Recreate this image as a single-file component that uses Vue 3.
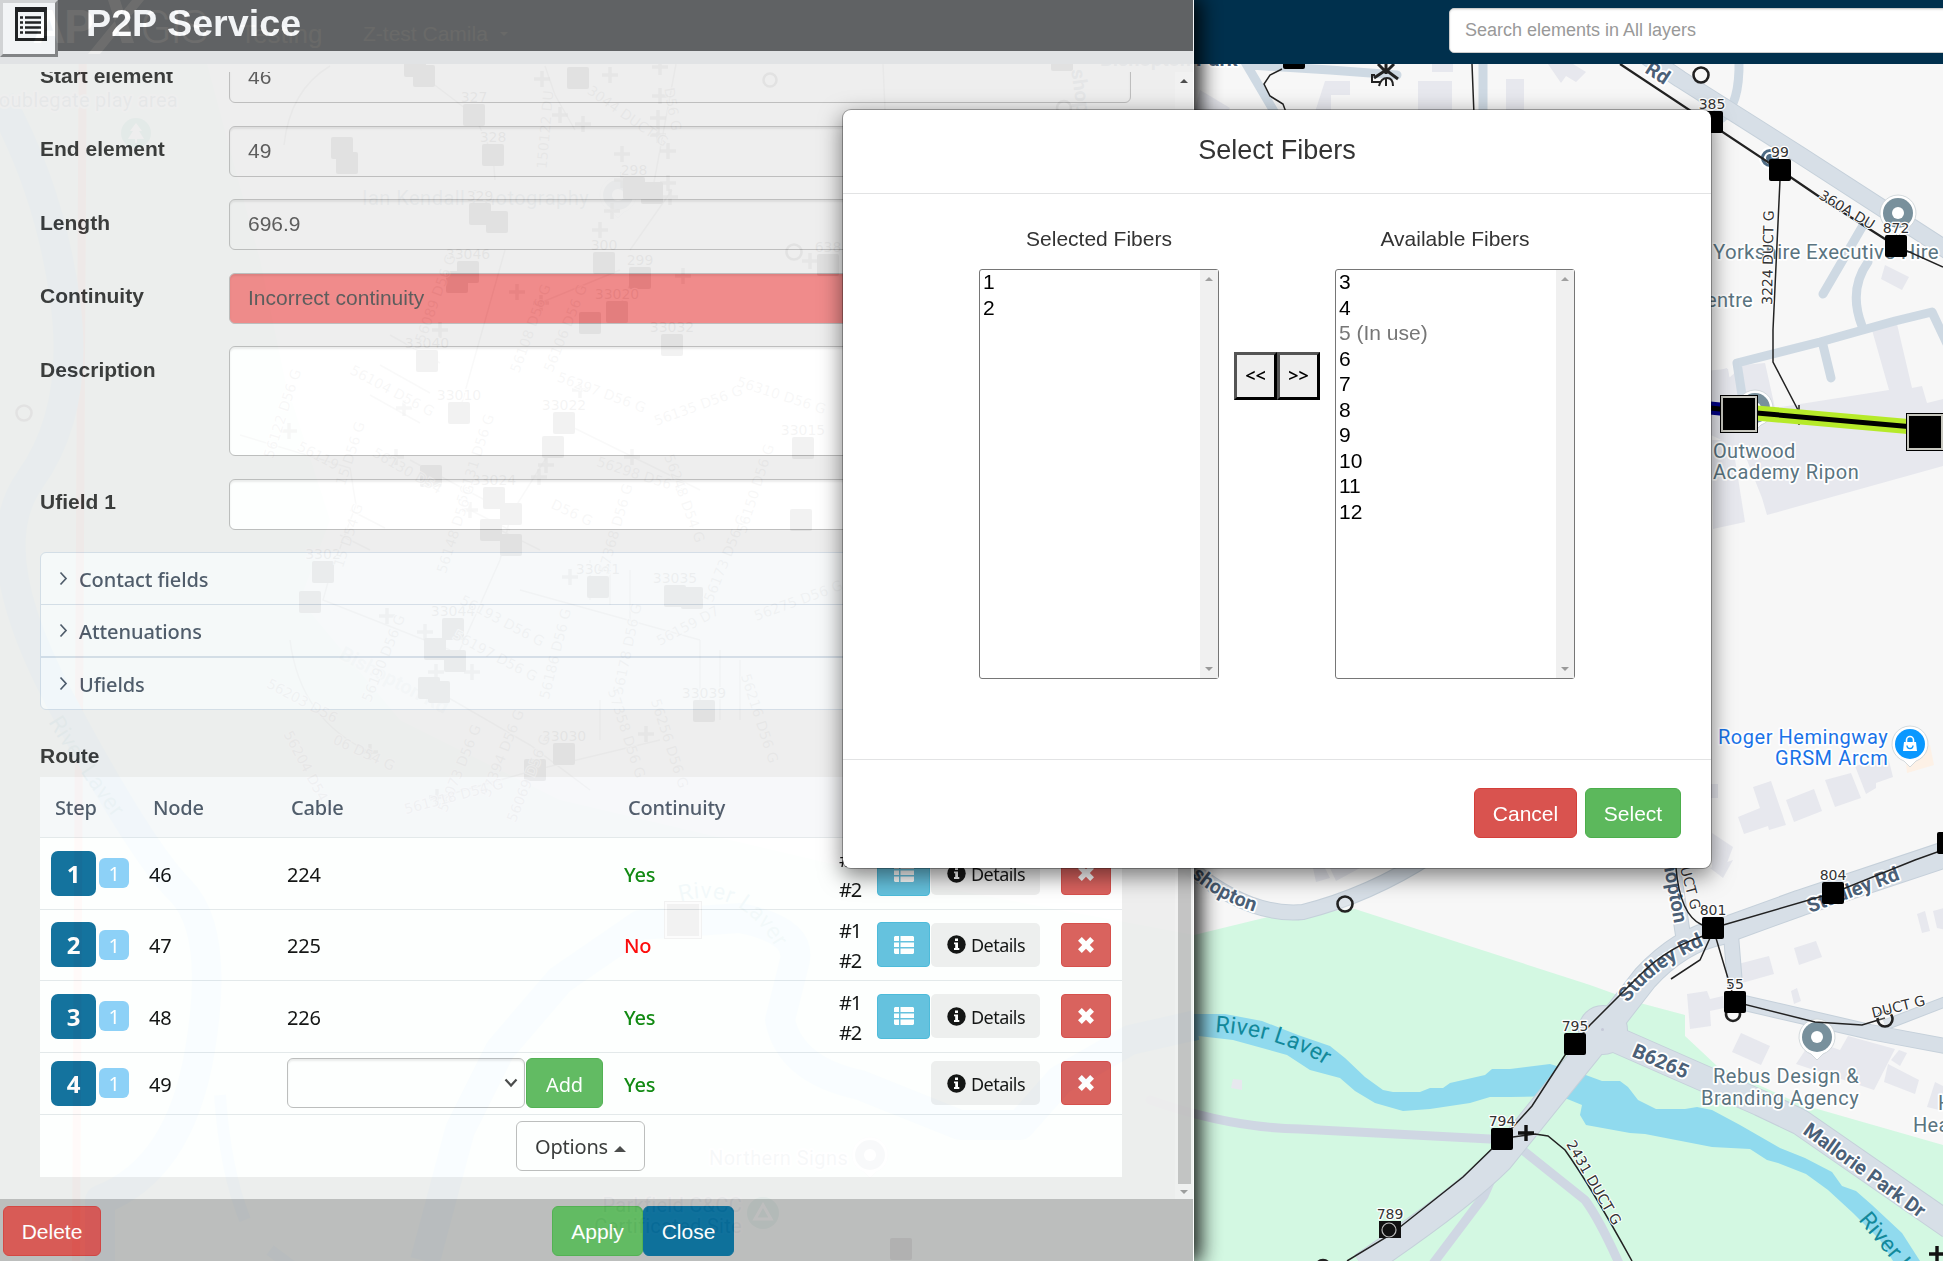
<script setup>
const steps = [
  { n: 1, node: 46, cable: '224', ok: true, fibers: ['#1', '#2'], h: 72 },
  { n: 2, node: 47, cable: '225', ok: false, fibers: ['#1', '#2'], h: 71 },
  { n: 3, node: 48, cable: '226', ok: true, fibers: ['#1', '#2'], h: 72 },
  { n: 4, node: 49, cable: null, ok: true, fibers: [], h: 62 },
]
const sections = ['Contact fields', 'Attenuations', 'Ufields']
const selected = ['1', '2']
const available = ['3', '4', '5 (In use)', '6', '7', '8', '9', '10', '11', '12']

const squares = [
  [1575, 1044, '795'], [1502, 1139, '794'], [1713, 928, '801'], [1833, 893, '804'],
  [1735, 1002, '55'], [1780, 170, '99'], [1896, 246, '872'], [1712, 122, '385'], [1294, 58, ''],
  [1948, 843, '8'],
  [415, 66, ''], [424, 76, ''], [474, 115, '327'], [493, 155, '328'], [347, 163, ''], [342, 148, ''],
  [480, 214, '329'], [497, 222, ''], [457, 282, ''], [468, 272, '33046'], [604, 263, '300'], [634, 188, '298'],
  [652, 193, ''], [640, 278, '299'], [617, 312, '33020'], [590, 323, ''], [672, 345, '33032'], [828, 265, '638'],
  [427, 361, '33040'], [459, 413, '33010'], [564, 423, '33022'], [553, 447, ''], [431, 476, ''], [494, 498, '33024'],
  [511, 514, ''], [491, 530, ''], [511, 545, ''], [323, 572, '3302'], [310, 602, ''], [598, 587, '33041'],
  [453, 629, '33044'], [435, 649, ''], [455, 661, ''], [429, 688, ''], [439, 692, ''], [675, 596, '33035'],
  [692, 598, ''], [704, 711, '33039'], [564, 754, '33030'], [535, 770, ''], [578, 78, ''], [1062, 60, ''],
  [803, 448, '33015'], [801, 520, ''], [901, 1249, ''],
]
const crosses = [
  [1526, 1133], [1937, 1254], [542, 79], [610, 75], [560, 115], [583, 124], [622, 154], [622, 180], [612, 211],
  [600, 230], [517, 292], [541, 303], [440, 330], [580, 390], [404, 408], [289, 431], [396, 457], [546, 465], [539, 477],
  [470, 510], [632, 457], [570, 577], [387, 616], [425, 632], [436, 672], [472, 672], [370, 752], [437, 797], [660, 67],
  [660, 96], [658, 118], [658, 135], [668, 151], [668, 183], [670, 197], [810, 261], [683, 276], [646, 734],
]
const ducts = [
  [440, 300, -70, '56089 D56 G'], [535, 330, -70, '56108 D56 G'], [570, 330, -68, '56106 D56 G'], [287, 415, -72, '56122 D56 G'],
  [390, 395, 28, '56104 D56 G'], [316, 460, 28, '56119'], [355, 455, -72, '15 D56 G'], [405, 475, 30, '56130 D54'],
  [480, 460, -72, '56131 D56 G'], [353, 537, -72, '15 D54 G'], [460, 530, -72, '56148 D56 G'], [500, 625, 28, '56193 D56 G'],
  [493, 660, 28, '56197 D56 G'], [388, 660, -68, '56190 D56 G'], [560, 655, -76, '56186 D56 G'], [300, 705, 28, '56203 D56'],
  [305, 775, 62, '56204 D54 G'], [362, 757, 25, '06 D54 G'], [464, 770, -68, '56073 D56 G'], [507, 755, -68, '57394 D56 G'],
  [533, 780, -68, '56069 D56 G'], [455, 801, -15, '561318 D54 G'], [600, 397, 20, '56297 D56 G'], [640, 480, 18, '56298 D56 G'],
  [620, 530, -74, '57368 D56 G'], [570, 517, 25, 'D56 G'], [632, 650, -78, '56178 D56 G'], [622, 735, 72, '57358 D56 G'],
  [665, 745, 72, '56256 D56 G'], [755, 720, 72, '56216 D56 G'], [690, 630, -28, '56159 D7'], [800, 605, -20, '56275 D56 G'],
  [730, 560, -68, '56173 D56 G'], [700, 410, -20, '56135 D56 G'], [550, 130, -85, '150122 DU'], [625, 120, 35, '3044 DUCT G'],
  [668, 110, 80, 'D56 G'], [760, 490, -72, '56150 D56 G'], [780, 400, 18, '56310 D56 G'], [680, 500, 70, '56248 D54 G'],
]
const houses = [
  '1325,81 1350,81 1350,95 1331,95 1331,112 1315,112', '1418,81 1452,81 1452,112 1418,112', '1432,64 1453,64 1453,72 1432,72',
  '1506,79 1524,79 1524,112 1506,112', '1200,90 1230,108 1225,115 1194,112',
  '1548,64 1560,56 1586,72 1576,82 1566,76 1561,83',
  '1885,265 1909,277 1902,290 1881,279', '1872,330 1897,324 1912,388 1922,386 1927,403 1947,398 1947,465 1767,515 1762,498 1743,450 1700,430 1690,440 1690,372 1728,369 1731,387 1714,392 1743,365 1765,363 1775,408 1889,390',
  '1712,440 1732,440 1745,522 1713,529',
  '1753,787 1771,781 1786,825 1769,830 1768,826 1744,834 1738,817 1760,808', '1786,800 1814,789 1822,811 1794,822',
  '1825,780 1851,773 1861,798 1835,807', '1855,766 1888,757 1893,777 1876,783 1876,788 1866,794',
  '1712,833 1733,847 1727,863 1712,868', '1794,948 1816,941 1822,957 1799,965', '1738,964 1769,956 1774,974 1742,983',
  '1687,994 1707,991 1710,999 1723,996 1724,1008 1710,1011 1711,1026 1690,1029', '1791,991 1797,988 1801,1001 1794,1004',
  '1741,1033 1770,1046 1761,1065 1732,1052', '1848,1036 1895,1049 1874,1090 1847,1081 1796,1064 1812,1040 1840,1050',
  '1899,1050 1907,1053 1900,1066 1891,1060', '1888,1064 1919,1080 1915,1094 1884,1082', '1917,914 1925,911 1930,931 1922,933',
  '1933,911 1947,907 1947,930 1937,928', '1935,1082 1947,1088 1947,1112 1927,1107', '1313,868 1325,868 1330,878 1316,882',
  '1330,868 1360,868 1336,881', '1233,1079 1242,1080 1242,1090 1231,1088', '1710,868 1733,860 1723,878',
  '1711,784 1718,784 1718,798 1711,798', '1711,373 1727,368 1731,384 1711,390',
]
</script>

<template>
  <div class="app">
    <svg class="map" width="1943" height="1261" viewBox="0 0 1943 1261">
      <defs>
        <path id="p-river" d="M1215 1032 Q1290 1036 1340 1076" />
        <path id="p-bishop" d="M1191 876 Q1220 903 1266 915" />
        <path id="p-hopton" d="M1663 862 L1676 934" />
        <path id="p-studley" d="M1628 1003 Q1655 965 1712 942" />
        <path id="p-studley2" d="M1810 913 L1912 875" />
        <path id="p-river2" d="M1858 1220 L1925 1300" />
        <path id="p-laver" d="M48 722 Q90 790 132 842" />
        <path id="p-laver2" d="M680 902 Q750 880 792 980" />
      </defs>
      <rect width="1943" height="1261" fill="#f7f7f7" />
      <path fill="#d3f8e2" d="M0 0H190L230 150 260 260 285 380 330 520 300 600 400 720 560 800 900 880 1194 935 1272 916 1355 909 1590 985 1640 1003 1685 1015V1036L1717 1066 1800 1104 1943 1145V1261H0Z" />
      <g fill="#e7e8ee"><polygon v-for="h in houses" :key="h" :points="h" /></g>
      <polygon points="1905,752 1930,745 1934,765 1907,773" fill="#fdf1e6" />
      <path stroke="#ff9b80" stroke-width="8" d="M83 0L76 1261" />
      <!-- water -->
      <g fill="none" stroke="#90daee" stroke-width="30" stroke-linejoin="round">
        <path d="M0 100Q50 190 65 300T30 480T60 700T180 890T200 1050T100 1200V1261" />
        <path d="M425 1261L460 1130 500 1050 560 980 640 925 740 918Q800 930 795 960L780 1020Q790 1070 860 1085L960 1125H1020L1060 1080 1130 1040 1196 1025" />
        <path stroke-width="12" d="M220 1095Q225 1170 245 1220M270 1250L350 1310" />
      </g>
      <path fill="#90daee" d="M1190 1014H1225L1262 1021 1298 1035 1330 1046 1345 1058 1365 1077 1383 1090 1393 1092H1420L1430 1088H1443L1450 1083 1485 1075 1492 1069H1510L1550 1064 1583 1074 1602 1081H1620L1628 1087 1638 1100 1656 1109H1685L1697 1107 1712 1110 1740 1125 1780 1148 1805 1158 1832 1172 1842 1186 1856 1191 1872 1205 1902 1233 1920 1261H1893L1880 1240 1853 1213 1828 1190 1806 1174 1778 1163 1767 1160 1750 1149 1712 1147 1645 1134 1630 1133 1586 1125 1580 1115 1582 1105 1560 1096 1510 1097H1490L1470 1103 1430 1109 1403 1111 1375 1103 1355 1091 1340 1078 1310 1070 1287 1055 1233 1040 1190 1035Z" />
      <!-- minor roads -->
      <g fill="none" stroke="#ced9e3" stroke-width="9" stroke-linejoin="round" stroke-linecap="round">
        <path d="M1245 62L1282 125M1250 65L1330 70 1397 75M1483 60V115M1865 222L1823 294M1868 262Q1848 290 1862 326M1742 395L1737 363L1820 342 1895 321 1932 312 1950 350M1823 345L1831 378" />
        <path d="M1739 60Q1740 105 1722 118" />
        <path stroke="#cfd7e3" d="M1150 1100Q1230 1128 1300 1129L1490 1139M1520 1148L1585 1200Q1600 1220 1622 1270M1491 1180L1484 1196 1432 1265" />
      </g>
      <!-- main roads -->
      <g fill="none" stroke-linejoin="round">
        <g stroke="#c5d0da">
          <path stroke-width="18" d="M1640 52L1680 79 1800 155 1950 252" />
          <path stroke-width="16" d="M1190 868Q1250 917 1303 912 1370 895 1430 856M1683 935L1672 862M1731 935L1735 985M1740 1002L1870 1032 1950 1047" />
          <path stroke-width="11" d="M1885 1025L1950 1000" />
          <path stroke-width="27" d="M1362 1266Q1460 1200 1500 1160L1600 1036M1600 1036L1645 978Q1680 940 1720 932L1800 903 1950 853M1612 1038L1760 1103 1800 1122 1950 1226" />
          <circle cx="1603" cy="1030" r="24" stroke-width="2" />
        </g>
        <g stroke="#d7dfe7">
          <path stroke-width="16" d="M1640 52L1680 79 1800 155 1950 252" />
          <path stroke-width="14" d="M1190 868Q1250 917 1303 912 1370 895 1430 856M1683 935L1672 862M1731 935L1735 985M1740 1002L1870 1032 1950 1047" />
          <path stroke-width="9" d="M1885 1025L1950 1000" />
          <path stroke-width="25" d="M1362 1266Q1460 1200 1500 1160L1600 1036M1600 1036L1645 978Q1680 940 1720 932L1800 903 1950 853M1612 1038L1760 1103 1800 1122 1950 1226" />
        </g>
      </g>
      <circle cx="1603" cy="1030" r="24" fill="#d7dfe7" />
      <circle cx="1602.5" cy="1029.500" r="1.500" fill="#c5c9d8" />
      <!-- place names -->
      <g class="halo road">
        <text><textPath href="#p-bishop">shopton</textPath></text>
        <text><textPath href="#p-hopton">hopton</textPath></text>
        <text><textPath href="#p-studley">Studley Rd</textPath></text>
        <text><textPath href="#p-studley2">Studley Rd</textPath></text>
        <text transform="translate(1631 1056) rotate(23)">B6265</text>
        <text transform="translate(1802 1133) rotate(36)">Mallorie Park Dr</text>
        <text transform="translate(1644 72) rotate(33)">Rd</text>
        <text x="1100" y="66">Bishopton Park</text>
        <text transform="translate(1071 70) rotate(82)">shop</text>
        <text transform="translate(338 658) rotate(28)" opacity=".4">Bishopton Rd</text>
      </g>
      <g class="water">
        <text><textPath href="#p-river">River Laver</textPath></text>
        <text><textPath href="#p-river2">River Laver</textPath></text>
        <text><textPath href="#p-laver">River Laver</textPath></text>
        <text><textPath href="#p-laver2">River Laver</textPath></text>
      </g>
      <g>
        <g v-for="p in [[1817, 1037], [1898, 213], [1755, 408], [870, 1155], [618, 195]]" :key="p[0]" :transform="`translate(${p[0]} ${p[1]})`">
          <path d="M0 23L-6 17A18 18 0 1 1 6 17Z" fill="#fff" stroke="#c9d0d4" stroke-width=".8" />
          <circle r="15" fill="#78909c" /><circle r="6" fill="#fff" />
        </g>
        <g transform="translate(136 133)"><circle r="15" fill="#35a58a" /><path d="M0-10L6-2H3L8 6H1V10H-1V6H-8L-3-2H-6Z" fill="#fff" /></g>
        <g transform="translate(763 1213)"><circle r="16" fill="#35a58a" /><path d="M0-8L8 6H-8Z" fill="none" stroke="#fff" stroke-width="3" /></g>
        <g transform="translate(1910 744)">
          <path d="M0 23L-6 17A18 18 0 1 1 6 17Z" fill="#fff" stroke="#c9d0d4" stroke-width=".8" />
          <circle r="15" fill="#0a98ff" />
          <path d="M-6-2H6L7 7H-7Z" fill="#fff" /><path d="M-3.500-2V-4a3.500 3.500 0 0 1 7 0V-2" fill="none" stroke="#fff" stroke-width="1.600" /><path d="M-3 1.500a3 3 0 0 0 6 0" fill="none" stroke="#0a98ff" stroke-width="1.300" />
        </g>
        <circle cx="1770" cy="158" r="10" fill="#4e6b84" stroke="#fff" stroke-width="2" /><path d="M1773 154a5 5 0 1 0 1 7h-4" fill="none" stroke="#fff" stroke-width="2" />
      </g>
      <g class="halo place">
        <text x="1713" y="259" textLength="226" lengthAdjust="spacingAndGlyphs">Yorkshire Executive Hire</text>
        <text x="1753" y="307" text-anchor="end">Centre</text>
        <text x="1713" y="458">Outwood</text>
        <text x="1713" y="479" textLength="146">Academy Ripon</text>
        <text x="1713" y="1083" textLength="146">Rebus Design &amp;</text>
        <text x="1701" y="1105" textLength="158">Branding Agency</text>
        <text x="1938" y="1110">H</text>
        <text x="1913" y="1132">Health</text>
        <text x="178" y="107" text-anchor="end">Doublegate  play area</text>
        <text x="362" y="205" textLength="227">Ian Kendall Photography</text>
        <text x="709" y="1165" textLength="139">Northern Signs</text>
        <text x="742" y="1212" text-anchor="end">Parkfield C&amp;CC</text>
        <text x="742" y="1233" text-anchor="end">Certificated Site</text>
        <text class="shop" x="1718" y="744" textLength="170">Roger Hemingway</text>
        <text class="shop" x="1775" y="765" textLength="113">GRSM Arcm</text>
      </g>
      <!-- network lines -->
      <g fill="none" stroke="#222" stroke-width="1.500">
        <path stroke-width="2.200" d="M1620 64L1780 170 1830 204 1896 246" />
        <path d="M1896 246L1943 267M1780 180L1773 330V362L1798 410M1799 405v5M1799 420v5M1472 64L1474 115M1282 69L1270 75 1264 84 1270 96 1283 104 1287 115" />
        <path d="M1347 1261L1390 1235 1463 1177 1502 1139 1532 1106 1567 1052 1590 1025 1640 975Q1670 945 1710 934M1713 928L1833 893 1915 860 1943 850" />
        <path d="M1513 1137L1535 1134 1548 1136 1565 1150Q1590 1185 1632 1261M1713 928L1735 1002 1815 1022 1862 1025 1885 1018M1710 938L1700 960 1671 979M1676 868Q1680 915 1702 925" />
        <g opacity=".5">
          <path d="M284 145Q290 90 330 66M415 70L474 115 493 155 495 180M545 66L555 95 575 130M672 190L630 250M637 270L617 312M540 303L620 270M459 413L505 250M240 435L350 468 356 505 330 575 323 600 450 650M290 640Q300 720 370 752M410 460L511 514 500 560 455 661M520 590L700 640M435 690L530 745 590 790M430 800L535 770 660 740M553 447L511 514M564 423L700 490M652 193L676 64M883 64L885 110" />
          <path d="M390 335l50 28M380 365l50 28M370 395l50 28M470 510l40 20M500 530l40 20M350 510l35 18M340 535l30 15M590 560v40M610 560v45M630 570v50M600 700v40M700 640v70M720 650v70M740 660v60" />
        </g>
      </g>
      <g fill="none" stroke-linecap="butt">
        <path d="M1640 401L1740 411" stroke="#00008b" stroke-width="13" /><path d="M1640 401L1740 411" stroke="#000" stroke-width="5" />
        <path d="M1745 412L1925 428" stroke="#b6ea2a" stroke-width="15" /><path d="M1745 412L1925 428" stroke="#000" stroke-width="5" />
      </g>
      <g fill="#fff" fill-opacity=".2" stroke="#222" stroke-width="2.600">
        <circle cx="1345" cy="904" r="7.500" /><circle cx="1701" cy="75" r="7.500" /><circle cx="1733" cy="1014" r="7" /><circle cx="1885" cy="1019" r="7.500" />
        <circle cx="24" cy="413" r="7.500" /><circle cx="794" cy="252" r="7.500" /><circle cx="770" cy="80" r="6.500" /><circle cx="1064" cy="108" r="7" /><circle cx="1323" cy="1267" r="7" />
      </g>
      <g stroke="#222" stroke-width="3" fill="none"><path d="M1378 64l8 8 8-8M1374 78l12-8 12 9M1386 64v10" /><path stroke-width="2" d="M1375 75h-3v7h9M1379 86q2-8 8-8t6 8M1386 79v7" /></g>
      <g stroke="#111" stroke-width="3.400"><path v-for="(c, i) in crosses" :key="i" :d="`M${c[0] - 8} ${c[1]}h16M${c[0]} ${c[1] - 8}v16`" :opacity="c[0] < 1194 ? 0.65 : 1" /></g>
      <rect v-for="(s, i) in squares" :key="i" :x="s[0] - 11" :y="s[1] - 11" width="22" height="22" rx="2" fill="#000" />
      <g v-for="b in [[1739, 414], [1925, 432], [683, 920]]" :key="b[0]">
        <rect :x="b[0] - 19" :y="b[1] - 19" width="38" height="38" fill="#000" /><rect :x="b[0] - 17" :y="b[1] - 17" width="34" height="34" fill="none" stroke="#c8c8c0" stroke-width="2" />
      </g>
      <g><rect x="1379" y="1221" width="22" height="17" fill="#111" /><circle cx="1389" cy="1230" r="7" fill="none" stroke="#bbb" stroke-width="1.200" /></g>
      <g class="halo id">
        <text v-for="(s, i) in squares.filter(q => q[2])" :key="i" :x="s[0]" :y="s[1] - 13" text-anchor="middle">{{ s[2] }}</text>
        <text x="1390" y="1219" text-anchor="middle">789</text>
      </g>
      <g class="halo duct">
        <text v-for="d in ducts" :key="d[3]" :transform="`translate(${d[0]} ${d[1]}) rotate(${d[2]})`" text-anchor="middle" opacity=".7">{{ d[3] }}</text>
        <text transform="translate(1566 1144) rotate(60)">2431 DUCT G</text>
        <text transform="translate(1772 305) rotate(-89)">3224 DUCT G</text>
        <text transform="translate(1818 198) rotate(31)">360A DU</text>
        <text transform="translate(1873 1018) rotate(-14)">DUCT G</text>
        <text transform="translate(1680 868) rotate(75)">UCT G</text>
      </g>
    </svg>

    <header class="navbar">
      <svg class="brand" width="230" height="64" viewBox="0 0 230 64" fill="#fff">
        <text x="94" y="43" text-anchor="end" font-weight="700">AP</text>
        <path d="M88 54H100L144 0H132ZM108 0H120L134 43H122Z" />
        <text x="140" y="43" font-weight="300" textLength="68">GIS</text>
      </svg>
      <span class="mode">Testing</span>
      <span class="project">Z-test Camila <i class="down" /></span>
      <div class="search">Search elements in All layers</div>
    </header>

    <section class="panel">
      <div class="panel-head">
        <div class="menu-btn">
          <svg width="32" height="34" viewBox="0 0 32 34"><path fill="#222" fill-rule="evenodd" d="M0 0H32V34H0ZM3 5V31H29V5Z" /><path stroke="#222" stroke-width="2.600" d="M10 10.500H26M10 15.500H26M10 20.500H26M10 25.500H26M5 10.500H8M5 15.500H8M5 20.500H8M5 25.500H8" /></svg>
        </div>
        <h1>P2P Service</h1>
      </div>
      <div class="panel-body">
        <div class="form">
          <div class="field"><label>Start element</label><div class="input ro">46</div></div>
          <div class="field"><label>End element</label><div class="input ro">49</div></div>
          <div class="field"><label>Length</label><div class="input ro">696.9</div></div>
          <div class="field"><label>Continuity</label><div class="input bad">Incorrect continuity</div></div>
          <div class="field"><label>Description</label><div class="input area" /></div>
          <div class="field"><label>Ufield 1</label><div class="input" /></div>
          <div class="accordion">
            <div v-for="s in sections" :key="s" class="section">
              <svg width="9" height="15" viewBox="0 0 9 15"><path d="M1.500 1.500L7 7.500 1.500 13.500" fill="none" stroke="#495565" stroke-width="1.700" /></svg><span>{{ s }}</span>
            </div>
          </div>
          <div class="route-label">Route</div>
          <div class="table">
            <div class="tr th"><span>Step</span><span>Node</span><span>Cable</span><span>Continuity</span></div>
            <div v-for="s in steps" :key="s.n" class="tr" :style="{ height: s.h + 'px' }">
              <div class="badges"><b class="step">{{ s.n }}</b><span class="sub">1</span></div>
              <span class="cell">{{ s.node }}</span>
              <span v-if="s.cable" class="cell">{{ s.cable }}</span>
              <div v-else class="add">
                <div class="select"><svg width="14" height="10" viewBox="0 0 14 10"><path d="M1.500 1.500L7 7.500 12.500 1.500" fill="none" stroke="#444" stroke-width="2.200" /></svg></div>
                <span class="btn green">Add</span>
              </div>
              <span class="cell cont" :class="{ no: !s.ok }">{{ s.ok ? 'Yes' : 'No' }}</span>
              <div class="fibers"><span v-for="f in s.fibers" :key="f">{{ f }}</span></div>
              <div class="list-cell">
                <div v-if="s.fibers.length" class="list">
                  <svg width="20" height="18" viewBox="0 0 20 18" fill="#fff"><path d="M1 0H5V5H0V1ZM6.500 0H19L20 1V5H6.500ZM0 6.500H5V11H0ZM6.500 6.500H20V11H6.500ZM0 12.500H5V18H1L0 17ZM6.500 12.500H20V17L19 18H6.500Z" /></svg>
                </div>
              </div>
              <div class="details">
                <svg width="19" height="19" viewBox="0 0 19 19"><circle cx="9.500" cy="9.500" r="9.200" fill="#0a0a0a" /><path fill="#fff" d="M8 3.500H11V6H8ZM7 7.500H11V13H12.300V15H7V13H8.200V9.300H7Z" /></svg>
                <span>Details</span>
              </div>
              <div class="del"><svg width="16" height="16" viewBox="0 0 16 16"><path d="M3.800 0L8 4.200 12.200 0 16 3.800 11.800 8 16 12.200 12.200 16 8 11.800 3.800 16 0 12.200 4.200 8 0 3.800Z" fill="#fff" /></svg></div>
            </div>
            <div class="opts"><div class="opt-btn"><span>Options</span><i class="up" /></div></div>
          </div>
        </div>
        <div class="scroll"><i class="up" /><div class="thumb" /><i class="down" /></div>
      </div>
      <div class="panel-foot">
        <span class="btn red">Delete</span>
        <span class="btn green apply">Apply</span>
        <span class="btn blue">Close</span>
      </div>
    </section>

    <div class="modal">
      <div class="m-head">Select Fibers</div>
      <div class="m-body">
        <div class="col">
          <div class="cap">Selected Fibers</div>
          <div class="listbox">
            <ul><li v-for="o in selected" :key="o">{{ o }}</li></ul>
            <div class="bar"><i class="up" /><i class="down" /></div>
          </div>
        </div>
        <div class="move"><span>&lt;&lt;</span><span>&gt;&gt;</span></div>
        <div class="col">
          <div class="cap">Available Fibers</div>
          <div class="listbox">
            <ul><li v-for="o in available" :key="o" :class="{ used: o.includes('use') }">{{ o }}</li></ul>
            <div class="bar"><i class="up" /><i class="down" /></div>
          </div>
        </div>
      </div>
      <div class="m-foot"><span class="btn red">Cancel</span><span class="btn green">Select</span></div>
    </div>
  </div>
</template>

<style>
body { margin: 0; overflow: hidden; }
</style>

<style scoped>
* { box-sizing: border-box; }
.app { position: relative; width: 1943px; height: 1261px; overflow: hidden; font: 21px/30px "Liberation Sans", Arial, sans-serif; color: #333; }
.map { position: absolute; inset: 0; }
.halo text { paint-order: stroke; stroke: #fff; stroke-width: 3.5px; stroke-linejoin: round; }
.road text { font: 700 20px Roboto, sans-serif; fill: #4b6077; }
.water text { font: 400 23px Roboto, sans-serif; fill: #12899b; letter-spacing: .4px; }
.place text { font: 400 20px Roboto, sans-serif; fill: #5a7480; letter-spacing: .3px; white-space: pre; }
.place .shop { fill: #1a73e8; }
.id text { font: 14px "DejaVu Sans", sans-serif; fill: #333; stroke-width: 2.5px; }
.duct text { font: 14px "DejaVu Sans", sans-serif; fill: #333; stroke-width: 2px; }

.navbar { position: absolute; inset: 0 0 auto 0; height: 64px; background: #00304d; color: #b5b5a0; overflow: hidden; }
.brand { position: absolute; left: 0; top: 0; font: 46px Roboto, sans-serif; }
.mode { position: absolute; left: 240px; top: 19px; font-size: 26px; }
.project { position: absolute; left: 363px; top: 19px; font-size: 21px; }
.project .down { display: inline-block; margin-left: 6px; vertical-align: 5px; border-top-color: #b5b5a0; }
.search { position: absolute; left: 1449px; top: 8px; width: 520px; height: 45px; padding-left: 15px; border: 1px solid #ccc; border-radius: 5px; background: #fff; box-shadow: inset 0 1px 2px rgba(0,0,0,.1); font-size: 18px; line-height: 42px; color: #999; }

.up, .down { display: block; width: 0; height: 0; border: 4px solid transparent; }
.up { border-top: 0; border-bottom: 4px solid #444; }
.down { border-bottom: 0; border-top: 4px solid #999; }

.panel { position: absolute; left: 0; top: 0; width: 1194px; height: 1261px; display: flex; flex-direction: column; background: #eee; border-right: 1px solid #fff; opacity: .95; box-shadow: 4px 0 20px 2px #000; }
.panel-head { height: 51px; flex: none; display: flex; background: #666; }
.menu-btn { width: 58px; height: 57px; padding: 4px 0 0 12px; background: #fff; border: 3px outset #ddd; }
.panel-head h1 { margin: 0 0 0 28px; font: 700 37.7px/46px "Liberation Sans", Arial, sans-serif; color: #fff; }
.panel-body { height: 1127px; margin-top: 21px; flex: none; display: flex; justify-content: space-between; overflow: hidden; }
.form { width: 1091px; margin: -20px 0 0 40px; }
.field { display: flex; justify-content: space-between; margin-bottom: 22.5px; }
.field label { font-weight: 700; padding-top: 8.5px; }
.input { width: 902px; height: 51px; padding-left: 18px; line-height: 47px; background: #fff; border: 1px solid #bbb; border-radius: 6px; color: #555; box-shadow: inset 0 2px 2px rgba(0,0,0,.075); }
.ro { background: #eee; }
.bad { background: #f08585; }
.area { height: 110px; }
.accordion { width: 1082px; height: 157.500px; display: flex; flex-direction: column; border: 1px solid #d3dde6; border-radius: 6px; background: #f7f9fa; }
.section { flex: 1; display: flex; align-items: center; padding-left: 18px; gap: 11px; color: #495565; font: 500 20px/30px "Noto Sans", sans-serif; letter-spacing: -.1px; }
.section span { padding-top: 3px; }
.section + .section { border-top: 1px solid #d3dde6; }
.section:last-child { border-top-width: 2px; }
.route-label { height: 67px; padding-top: 31px; font-weight: 700; }
.table { width: 1082px; background: #fff; font: 20px/30px "Noto Sans", sans-serif; letter-spacing: -.2px; color: #0a0a0a; }
.tr { display: grid; grid-template-columns: 98px 138px 337px 215px 38px 54px 130px 50px; padding-left: 11px; align-items: center; border-bottom: 1px solid #e4e8ea; }
.th { height: 61px; background: #f7f8fa; color: #495565; font-weight: 500; padding: 3px 0 0 15px; }
.cell { padding-top: 3px; }
.badges { display: flex; align-items: center; gap: 3px; color: #fff; }
.step { width: 45px; height: 45px; border-radius: 7px; background: #0a6c9a; text-align: center; font: 700 24px/46px "Noto Sans", sans-serif; }
.sub { width: 30px; height: 30px; border-radius: 6px; background: #8acff8; text-align: center; line-height: 31px; }
.cont { font-weight: 500; color: #078407; }
.cont.no { color: #f00; }
.fibers { padding-top: 3px; }
.fibers span { display: block; letter-spacing: -1.2px; }
.list { width: 53px; height: 45px; display: flex; align-items: center; justify-content: center; padding-left: 1px; border-radius: 4px; border: 1px solid #46b8da; background: #5fbfde; }
.details { width: 109px; height: 44px; display: flex; align-items: center; gap: 5px; padding-left: 16px; border-radius: 5px; background: #efefef; font-size: 18px; letter-spacing: -.55px; }
.details span { padding-top: 1px; }
.del { width: 50px; height: 44px; display: flex; align-items: center; justify-content: center; border-radius: 4px; border: 1px solid #d43f3a; background: #d9534f; opacity: .95; }
.add { display: flex; gap: 1px; }
.select { width: 238px; height: 50px; display: flex; align-items: center; justify-content: flex-end; padding-right: 6px; border: 1px solid #bbb; border-radius: 6px; box-shadow: inset 0 2px 2px rgba(0,0,0,.075); }
.btn { display: block; height: 50px; border-radius: 6px; border: 1px solid; text-align: center; line-height: 49px; color: #fff; }
.green { background: #5cb85c; border-color: #4cae4c; }
.red { background: #d9534f; border-color: #d43f3a; }
.blue { background: #046a97; border-color: #046a97; }
.add .btn { width: 77px; line-height: 51px; }
.opts { height: 62px; display: flex; padding: 6px 0 0 476px; }
.opt-btn { width: 129px; height: 50px; display: flex; align-items: center; gap: 6px; padding: 2px 0 0 18px; border: 1px solid #bbb; border-radius: 6px; color: #333; }
.opt-btn .up { margin-top: 5px; border-width: 0 6px 6px; }
.scroll { width: 18px; display: flex; flex-direction: column; align-items: center; padding: 7px 0 5px; background: #f1f1f1; }
.thumb { width: 13px; height: 400px; margin: auto 0 6px; background: #c1c1c1; }
.panel-foot { flex: 1; display: flex; padding: 7px 0 0 3px; background: #bbb; }
.panel-foot .red { width: 98px; }
.panel-foot .apply { width: 91px; margin-left: 451px; }
.panel-foot .blue { width: 91px; }

.modal { position: absolute; left: 842px; top: 109px; width: 870px; height: 760px; background: #fff; background-clip: padding-box; border: 1px solid rgba(0,0,0,.3); border-radius: 9px; box-shadow: 0 7px 22px rgba(0,0,0,.5); display: flex; flex-direction: column; }
.m-head { height: 84px; flex: none; border-bottom: 1px solid #e2e3e4; text-align: center; font-size: 27px; line-height: 81px; }
.m-body { flex: 1; display: flex; padding: 30px 0 0 136px; }
.col { width: 240px; }
.cap { text-align: center; height: 45px; }
.listbox { height: 410px; display: flex; border: 1px solid #767676; border-radius: 3px; }
.listbox ul { flex: 1; margin: -1px 0 0; padding: 0 0 0 3px; list-style: none; color: #000; line-height: 25.5px; }
.used { color: #767676; }
.bar { width: 18px; background: #f0f0f0; display: flex; flex-direction: column; justify-content: space-between; align-items: center; padding: 7px 0; }
.bar .up { border-bottom-color: #a0a0a0; }
.move { width: 116px; display: flex; justify-content: center; padding-top: 128px; }
.move span { width: 43px; height: 48px; border: 3px outset #000; background: #efefef; color: #000; text-align: center; font: 600 18px/41px "Noto Sans", sans-serif; letter-spacing: 0; }
.m-foot { height: 109px; flex: none; display: flex; justify-content: flex-end; gap: 8px; padding: 28px 30px 0 0; border-top: 1px solid #e2e3e4; }
.m-foot .red { width: 103px; }
.m-foot .green { width: 96px; }
</style>
